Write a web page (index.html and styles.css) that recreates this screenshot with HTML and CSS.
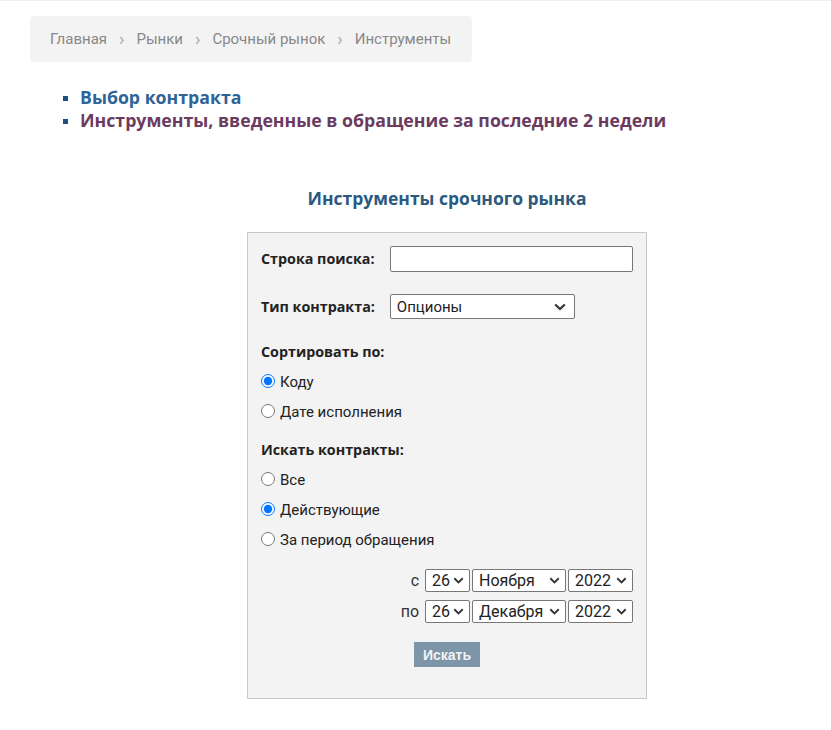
FILE: index.html
```html
<!DOCTYPE html>
<html lang="ru">
<head>
  <meta charset="UTF-8">
  <meta name="viewport" content="width=device-width, initial-scale=1.0">
  <title>Инструменты срочного рынка</title>
  <link rel="stylesheet" href="styles.css">
</head>
<body>
  <div class="page">
    <!-- Breadcrumbs -->
    <nav class="breadcrumbs">
      <a href="#">Главная</a>
      <span class="sep">&rsaquo;</span>
      <a href="#">Рынки</a>
      <span class="sep">&rsaquo;</span>
      <a href="#">Срочный рынок</a>
      <span class="sep">&rsaquo;</span>
      <span>Инструменты</span>
    </nav>

    <ul class="links">
      <li><a href="#" class="link-blue">Выбор контракта</a></li>
      <li><a href="#" class="link-purple">Инструменты, введенные в обращение за последние 2 недели</a></li>
    </ul>

    <div class="tool">
      <h2>Инструменты срочного рынка</h2>

      <form class="search-form">
        <div class="row">
          <label class="label" for="q">Строка поиска:</label>
          <input type="text" id="q" class="text-input">
        </div>

        <div class="row">
          <label class="label" for="type">Тип контракта:</label>
          <select id="type" class="select type-select">
            <option>Опционы</option>
            <option>Фьючерсы</option>
          </select>
        </div>

        <div class="group-title">Сортировать по:</div>
        <label class="radio"><input type="radio" name="sort" checked> Коду</label>
        <label class="radio"><input type="radio" name="sort"> Дате исполнения</label>

        <div class="group-title second">Искать контракты:</div>
        <label class="radio"><input type="radio" name="state"> Все</label>
        <label class="radio"><input type="radio" name="state" checked> Действующие</label>
        <label class="radio"><input type="radio" name="state"> За период обращения</label>

        <div class="dates">
          <div class="date-row">
            <span>с</span>
            <select class="select d-day"><option>26</option></select>
            <select class="select d-month"><option>Ноября</option></select>
            <select class="select d-year"><option>2022</option></select>
          </div>
          <div class="date-row">
            <span>по</span>
            <select class="select d-day"><option>26</option></select>
            <select class="select d-month"><option>Декабря</option></select>
            <select class="select d-year"><option>2022</option></select>
          </div>
        </div>

        <div class="actions">
          <button type="button" class="btn">Искать</button>
        </div>
      </form>
    </div>
  </div>
</body>
</html>
```

FILE: styles.css
```css
body {
  margin: 0;
  font-family: Roboto, "Noto Sans", sans-serif;
  color: #222;
  background: #fff;
  border-top: 1px solid #f0f0f0;
}

.page {
  padding: 15px 0 30px 30px;
}

.breadcrumbs {
  display: inline-flex;
  align-items: center;
  height: 46px;
  padding: 0 21px 0 20px;
  background: #f3f3f3;
  border-radius: 4px;
  font-size: 15px;
  color: #888;
}

.breadcrumbs a {
  color: #888;
  text-decoration: none;
}

.breadcrumbs .sep {
  color: #aaa;
  font-size: 18px;
  margin: 0 12px 2px 12px;
}

.links {
  list-style: square;
  margin: 24px 0 0 0;
  padding-left: 50px;
  font-family: "Open Sans", sans-serif;
  font-size: 17.7px;
  font-weight: bold;
  line-height: 23px;
}

.links li::marker {
  color: #1f4f80;
  font-size: 14px;
}

.links a {
  text-decoration: none;
}

.link-blue {
  color: #2e6497;
}

.link-purple {
  color: #6b3b5f;
}

.tool {
  padding-left: 33px;
}

.tool h2 {
  margin: 55px 0 23px;
  text-align: center;
  font-family: "Open Sans", sans-serif;
  font-size: 17.5px;
  line-height: 22px;
  color: #2b5a80;
}

.search-form {
  width: 400px;
  box-sizing: border-box;
  margin: 0 auto;
  padding: 13px 13px 31px;
  background: #f3f3f3;
  border: 1px solid #c8c8c8;
  font-size: 15px;
}

.row {
  display: flex;
  align-items: center;
  margin-bottom: 22px;
}

.label,
.group-title {
  font-family: "Open Sans", sans-serif;
  font-weight: bold;
  font-size: 14.3px;
  line-height: 18px;
}

.label {
  margin-right: 15px;
}

.text-input {
  flex: 1;
  height: 26px;
  box-sizing: border-box;
  border: 1px solid #777;
  border-radius: 2px;
  background: #fff;
}

/* selects with a bold chevron like the original */
.select {
  appearance: none;
  -webkit-appearance: none;
  box-sizing: border-box;
  border: 1px solid #777;
  border-radius: 2px;
  padding: 0 20px 0 6px;
  background: #fff url("data:image/svg+xml,%3Csvg xmlns='http://www.w3.org/2000/svg' width='12' height='8' viewBox='0 0 12 8'%3E%3Cpath d='M1.2 1.5l4.8 4.6 4.8-4.6' fill='none' stroke='%23333' stroke-width='2.2'/%3E%3C/svg%3E") no-repeat right 8px center;
  background-size: 12px 8px;
  font-family: Roboto, sans-serif;
  font-size: 15px;
  color: #222;
}

.type-select {
  width: 185px;
  height: 25px;
}

.group-title {
  margin: 24px 0 6px;
}

.group-title.second {
  margin-top: 14px;
}

.radio {
  display: flex;
  align-items: center;
  height: 30px;
}

.radio input {
  width: 14px;
  height: 14px;
  margin: 0 5px 3px 0;
}

.dates {
  margin-top: 14px;
  display: flex;
  flex-direction: column;
  align-items: flex-end;
  gap: 8px;
}

.date-row {
  display: flex;
  align-items: center;
  gap: 2px;
}

.date-row span {
  margin-right: 4px;
  font-size: 16px;
  color: #333;
}

.date-row .select {
  height: 23px;
  padding: 0 16px 0 6px;
  background-position: right 5px center;
  background-size: 11px 7px;
  font-size: 16px;
}

.d-day {
  width: 45px;
}

.d-month {
  width: 94px;
}

.d-year {
  width: 65px;
}

.actions {
  margin-top: 19px;
  text-align: center;
}

.btn {
  background: #7d95a9;
  color: #f2f2f2;
  border: none;
  font-family: "Liberation Sans", Arial, sans-serif;
  font-weight: bold;
  font-size: 14px;
  height: 25px;
  padding: 0 9px;
}
```
